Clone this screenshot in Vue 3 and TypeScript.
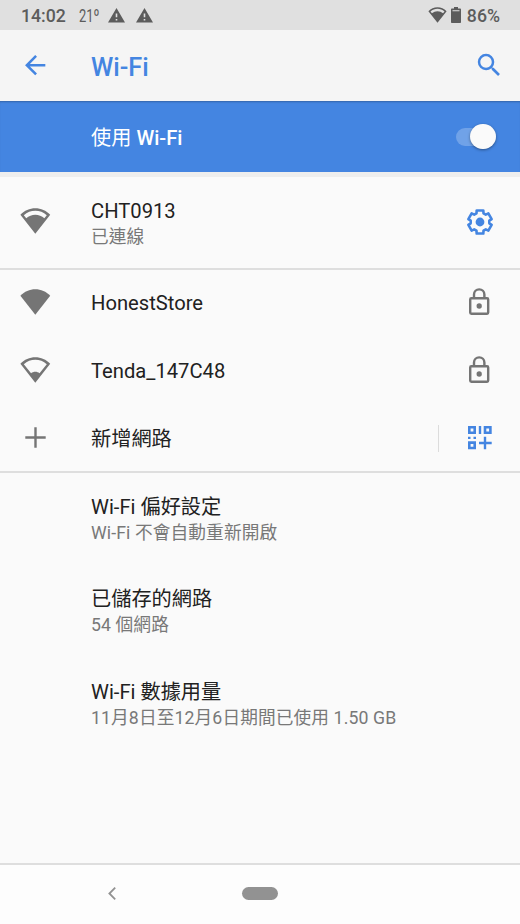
<script setup lang="ts">
import { ref } from 'vue'

interface Network {
  ssid: string
  level: 'full' | 'high' | 'low'
}

interface Preference {
  title: string
  summary: string
}

const enabled = ref(true)

const networks: Network[] = [
  { ssid: 'HonestStore', level: 'full' },
  { ssid: 'Tenda_147C48', level: 'low' }
]

const preferences: Preference[] = [
  { title: 'Wi-Fi 偏好設定', summary: 'Wi-Fi 不會自動重新開啟' },
  { title: '已儲存的網路', summary: '54 個網路' },
  { title: 'Wi-Fi 數據用量', summary: '11月8日至12月6日期間已使用 1.50 GB' }
]

// Signal fan (30x26 units): outer shape, and the hole left by the missing bars.
const FAN = 'M15 25.6L0.2 6.8C4.2 2.6 9.4 0.3 15 0.3S25.8 2.6 29.8 6.8Z'
const fanPaths: Record<Network['level'], string> = {
  full: FAN,
  high: `${FAN}M3.6 7.2L6 10.2C8.6 8 11.6 6.8 15 6.8S21.4 8 24 10.2L26.4 7.2C23.1 4.3 19.2 2.8 15 2.8S6.9 4.3 3.6 7.2Z`,
  low: `${FAN}M3.6 7.2L10.8 16.2C12 15.2 13.4 14.7 15 14.7S18 15.2 19.2 16.2L26.4 7.2C23.1 4.3 19.2 2.8 15 2.8S6.9 4.3 3.6 7.2Z`
}

// Six-tooth gear outline around (15, 15): tip and valley corners of each tooth.
const gearPoints = Array.from({ length: 6 }, (_, i) =>
  [
    [-22, 9.4],
    [-16, 12],
    [16, 12],
    [22, 9.4]
  ].map(([offset, r]) => {
    const rad = ((i * 60 + offset) * Math.PI) / 180
    return `${(15 + r * Math.sin(rad)).toFixed(2)},${(15 - r * Math.cos(rad)).toFixed(2)}`
  })
)
  .flat()
  .join(' ')
</script>

<template>
  <div class="screen">
    <div class="status-bar">
      <span class="clock">14:02</span>
      <span class="temp">21º</span>
      <svg v-for="n in 2" :key="n" class="warning" viewBox="0 0 17 15">
        <path fill-rule="evenodd" d="M8.5 0L17 14.6H0ZM7.7 5.4V9.2H9.3V5.4ZM7.7 10.9V12.5H9.3V10.9Z" />
      </svg>
      <span class="spacer"></span>
      <svg class="status-wifi" viewBox="0 0 30 26">
        <path fill-rule="evenodd" :d="fanPaths.high" />
      </svg>
      <svg class="battery" viewBox="0 0 10 16">
        <path fill-rule="evenodd" d="M3 0H7V1.6H9.2Q10 1.6 10 2.4V15.2Q10 16 9.2 16H0.8Q0 16 0 15.2V2.4Q0 1.6 0.8 1.6H3ZM1.5 3.2V4.3H8.5V3.2Z" />
      </svg>
      <span class="percent">86%</span>
    </div>

    <header class="app-bar">
      <div class="lead">
        <svg class="icon" viewBox="0 0 24 24">
          <path d="M20 11H7.83l5.59-5.59L12 4l-8 8 8 8 1.41-1.41L7.83 13H20v-2z" />
        </svg>
      </div>
      <h1>Wi-Fi</h1>
      <svg class="icon search" viewBox="0 0 24 24">
        <path d="M15.5 14h-.79l-.28-.27A6.471 6.471 0 0 0 16 9.5 6.5 6.5 0 1 0 9.5 16c1.61 0 3.09-.59 4.23-1.57l.27.28v.79l5 4.99L20.49 19l-4.99-5zm-6 0C7.01 14 5 11.99 5 9.5S7.01 5 9.5 5 14 7.01 14 9.5 11.99 14 9.5 14z" />
      </svg>
    </header>

    <div class="switch-bar">
      <span class="switch-label">使用 <b>Wi-Fi</b></span>
      <button class="toggle" :class="{ on: enabled }" aria-label="Wi-Fi" @click="enabled = !enabled">
        <span class="thumb"></span>
      </button>
    </div>

    <main>
      <section class="connected">
        <div class="row tall">
          <div class="lead">
            <svg class="fan" viewBox="0 0 30 26">
              <path fill-rule="evenodd" :d="fanPaths.high" />
            </svg>
          </div>
          <div class="text">
            <div class="title">CHT0913</div>
            <div class="summary">已連線</div>
          </div>
          <svg class="gear" viewBox="0 0 30 30">
            <polygon :points="gearPoints" />
            <circle cx="15" cy="15" r="4.4" />
          </svg>
        </div>
      </section>

      <section class="available">
        <div v-for="net in networks" :key="net.ssid" class="row">
          <div class="lead">
            <svg class="fan" viewBox="0 0 30 26">
              <path fill-rule="evenodd" :d="fanPaths[net.level]" />
            </svg>
          </div>
          <div class="text">
            <div class="title">{{ net.ssid }}</div>
          </div>
          <svg class="icon lock" viewBox="0 0 24 24">
            <rect x="4.9" y="8.9" width="14.2" height="12.2" rx="0.9" />
            <path d="M7.9 8.5V6a4.1 4.1 0 0 1 8.2 0v2.5" />
            <circle cx="12" cy="15" r="2.1" />
          </svg>
        </div>
        <div class="row add">
          <div class="lead">
            <svg class="plus" viewBox="0 0 21 21">
              <path d="M9.3 0.3h2.4v9h9v2.4h-9v9H9.3v-9h-9V9.3h9z" />
            </svg>
          </div>
          <div class="text">
            <div class="title">新增網路</div>
          </div>
          <span class="separator"></span>
          <svg class="qr" viewBox="0 0 24 24">
            <path
              fill-rule="evenodd"
              d="M0 0H8V8H0ZM2.6 2.6V5.4H5.4V2.6ZM10.8 0H13.2V8H10.8ZM15.7 0H23.7V8H15.7ZM18.3 2.6V5.4H21.1V2.6ZM0 10.7H2.5V13H0ZM5.5 10.7H8V13H5.5ZM0 15.3H8V23.3H0ZM2.6 17.9V20.7H5.4V17.9ZM15.8 10.7H18.2V15.8H23.7V18.2H18.2V23.3H15.8V18.2H11V15.8H15.8Z"
            />
          </svg>
        </div>
      </section>

      <section class="preferences">
        <div v-for="pref in preferences" :key="pref.title" class="row pref">
          <div class="text">
            <div class="title">{{ pref.title }}</div>
            <div class="summary">{{ pref.summary }}</div>
          </div>
        </div>
      </section>
    </main>

    <nav class="nav-bar">
      <svg class="nav-back" viewBox="0 0 8 13">
        <path d="M7.2 0.7L1.4 6.5L7.2 12.3" />
      </svg>
      <span class="home-pill"></span>
    </nav>
  </div>
</template>

<style>
body {
  background: #fafafa;
}
</style>

<style scoped>
.screen {
  display: flex;
  flex-direction: column;
  width: 520px;
  height: 924px;
  overflow: hidden;
  background: #fafafa;
  color: #212121;
  font-family: Roboto, 'Noto Sans CJK TC', sans-serif;
}
svg {
  display: block;
  flex: none;
}

.status-bar {
  display: flex;
  align-items: center;
  flex: none;
  box-sizing: border-box;
  height: 30px;
  padding: 0 20px 0 21px;
  background: #e0e0e0;
  color: #5c5c5c;
  fill: #5c5c5c;
  font-size: 17.7px;
  font-weight: 500;
  line-height: 30px;
}
.clock,
.percent {
  padding-top: 2px;
}
.clock {
  width: 58px;
}
.temp {
  width: 28.5px;
  padding-top: 2px;
  font-size: 18.5px;
  font-weight: 400;
  transform: scaleX(0.7);
  transform-origin: left;
}
.warning {
  width: 17px;
  height: 15px;
  margin-right: 11px;
}
.spacer {
  flex: 1;
}
.status-wifi {
  width: 19px;
  height: 16px;
  margin-right: 4.5px;
}
.battery {
  width: 10px;
  height: 16px;
  margin-right: 5.5px;
}

.app-bar {
  display: flex;
  align-items: center;
  flex: none;
  height: 71px;
  padding-right: 16px;
  background: #f5f5f5;
  fill: #4485e1;
}
.app-bar h1 {
  flex: 1;
  margin: 0;
  padding-top: 4px;
  color: #4485e1;
  font-size: 25.3px;
  font-weight: 500;
  line-height: 30px;
}
.lead {
  display: flex;
  flex: none;
  width: 71px;
  padding-left: 20px;
}
.icon {
  width: 30.4px;
  height: 30.4px;
}

.switch-bar {
  display: flex;
  align-items: center;
  justify-content: space-between;
  flex: none;
  height: 71px;
  padding: 0 24.5px 0 91px;
  background: #4485e1;
  box-shadow: inset 0 2px 2px -1px rgba(0, 0, 0, 0.25);
}
.switch-label {
  padding-top: 2px;
  color: #fff;
  font-size: 20.2px;
  line-height: 26px;
}
.switch-label b {
  font-weight: 500;
}
.toggle {
  display: flex;
  align-items: center;
  width: 40px;
  height: 18px;
  padding: 0;
  border: 0;
  border-radius: 9px;
  background: rgba(255, 255, 255, 0.24);
}
.toggle.on {
  justify-content: flex-end;
}
.thumb {
  flex: none;
  width: 25.4px;
  height: 25.4px;
  border-radius: 50%;
  background: #fafafa;
  box-shadow: 0 1px 3px rgba(0, 0, 0, 0.4);
}

main {
  flex: 1;
  border-top: 5px solid #eee;
}
.connected,
.available {
  border-bottom: 2px solid #dedede;
}
.row {
  display: flex;
  align-items: center;
  height: 67.4px;
  padding-right: 25px;
  fill: #757575;
}
.available {
  height: 201px;
}
.available .title {
  margin-bottom: 1px;
}
.available .add .title {
  margin: 2px 0 0;
}
.row.tall {
  height: 91px;
}
.row.tall .text {
  padding-top: 2.4px;
}
.preferences {
  padding-top: 0.6px;
}
.row.pref {
  height: 92.4px;
  padding-left: 91px;
}
.text {
  flex: 1;
}
.title {
  font-size: 20.2px;
  line-height: 26px;
}
.summary {
  color: #787878;
  font-size: 17.7px;
  line-height: 26px;
  letter-spacing: 0.1px;
}
.fan {
  width: 30.6px;
  height: 26.2px;
  margin-bottom: 2.4px;
}
.plus {
  width: 21px;
  height: 21px;
  margin: 0 0 1px 5px;
}
.gear {
  width: 30px;
  height: 30px;
  margin-bottom: 1.4px;
  fill: #4485e1;
}
.gear polygon {
  fill: none;
  stroke: #4485e1;
  stroke-width: 2.6;
  stroke-linejoin: round;
}
.lock {
  margin: 0 0.6px 2.6px 0;
}
.lock rect,
.lock path {
  fill: none;
  stroke: #757575;
  stroke-width: 1.9;
}
.separator {
  width: 1px;
  height: 27px;
  margin-right: 29px;
  background: #dcdcdc;
}
.qr {
  width: 24px;
  height: 24px;
  margin-right: 3px;
  fill: #4485e1;
}

.nav-bar {
  display: flex;
  align-items: center;
  flex: none;
  box-sizing: border-box;
  height: 61px;
  padding: 0 0 2px 108px;
  border-top: 2px solid #dedede;
  background: #fdfdfd;
}
.nav-back {
  width: 8px;
  height: 13px;
  margin-right: 126px;
  fill: none;
  stroke: #929292;
  stroke-width: 1.8;
}
.home-pill {
  width: 36px;
  height: 13px;
  border-radius: 7px;
  background: #929292;
}
</style>
